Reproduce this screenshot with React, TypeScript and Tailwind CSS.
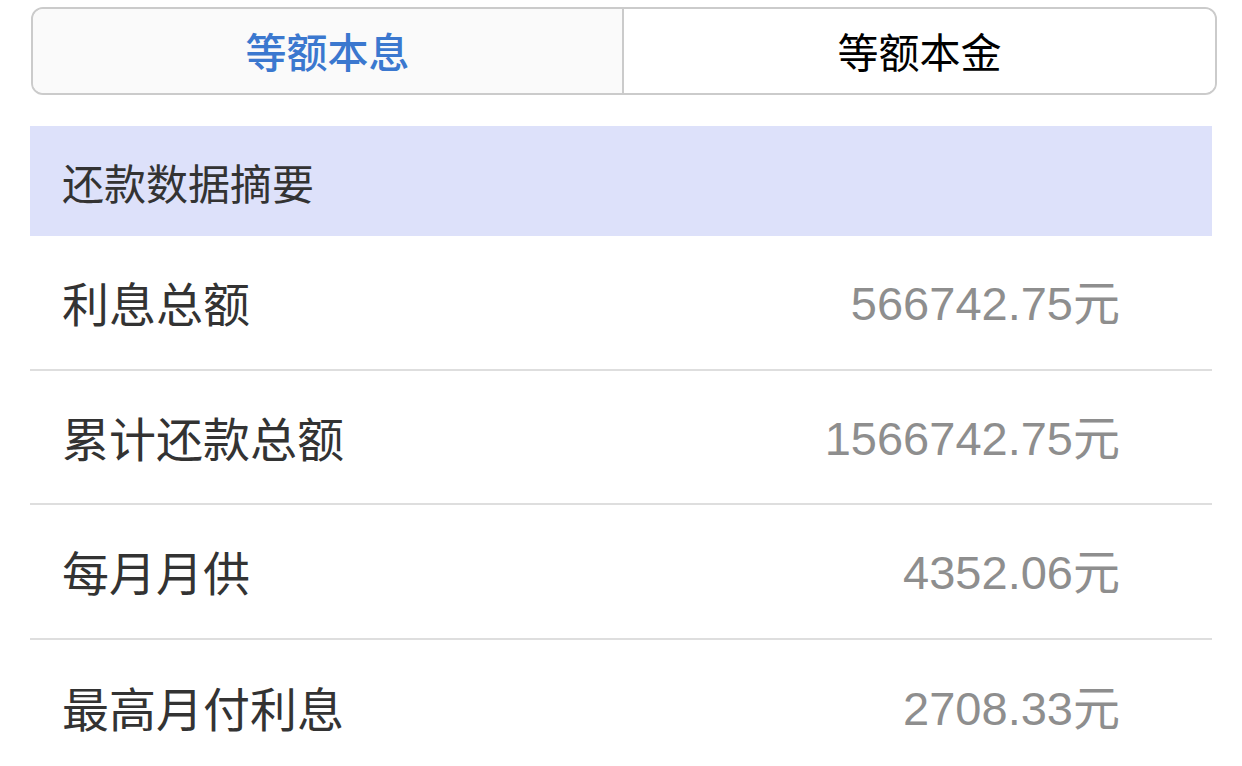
import React from "react";

const font = { fontFamily: '"Noto Sans CJK SC", "Noto Sans", sans-serif' };

const rows = [
  { label: "利息总额", value: "566742.75" },
  { label: "累计还款总额", value: "1566742.75" },
  { label: "每月月供", value: "4352.06" },
  { label: "最高月付利息", value: "2708.33" },
];

export default function App() {
  return (
    <div className="w-[1242px] h-[766px] bg-white overflow-hidden" style={font}>
      {/* Tabs */}
      <div className="pt-[7px] pl-[31px] pr-[25px]">
        <div className="flex h-[88px] rounded-[12px] border-2 border-[#cbcbcb] overflow-hidden">
          <div className="flex-1 flex items-center justify-center bg-[#fafafa] text-[41px] font-medium text-[#3b78cf]">
            等额本息
          </div>
          <div className="w-[2px] bg-[#cbcbcb]" />
          <div className="w-[591px] flex items-center justify-center bg-white text-[41px] text-black">
            等额本金
          </div>
        </div>
      </div>

      {/* Summary */}
      <div className="mt-[31px] ml-[30px] w-[1182px]">
        <div className="h-[110px] bg-[#dde1fa] flex items-center pl-[32px] text-[42px] text-[#333333]">
          还款数据摘要
        </div>
        {rows.map((r, i) => (
          <div
            key={r.label}
            className={
              "h-[134.5px] flex items-center justify-between pl-[32px] pr-[92px] " +
              (i < rows.length - 1 ? "border-b-2 border-[#dedede]" : "")
            }
          >
            <span className="text-[47px] text-[#333333]">{r.label}</span>
            <span className="text-[47px] text-[#8e8e8e]">
              <span style={{ fontFamily: '"Liberation Sans", Arial, sans-serif' }}>{r.value}</span>
              元
            </span>
          </div>
        ))}
      </div>
    </div>
  );
}
